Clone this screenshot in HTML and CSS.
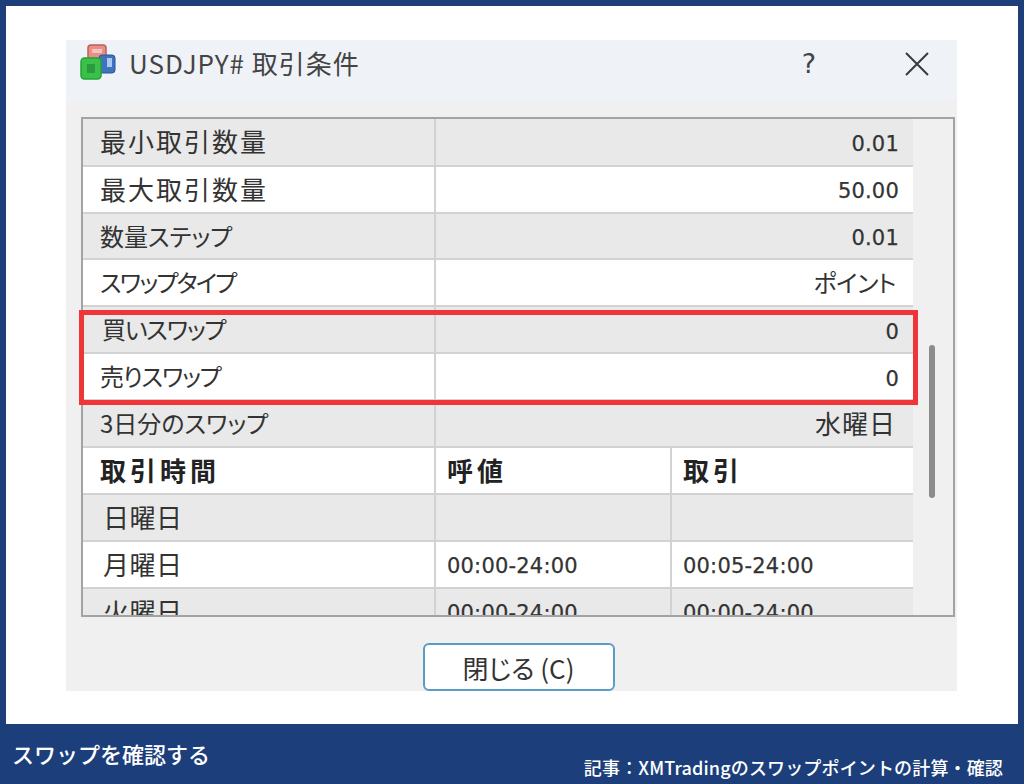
FILE: index.html
```html
<!DOCTYPE html>
<html lang="ja">
<head>
<meta charset="utf-8">
<title>USDJPY# 取引条件</title>
<link rel="stylesheet" href="styles.css">
</head>
<body>
<main class="stage">
  <section class="dialog">
    <header class="titlebar">
      <svg class="app-icon" width="36" height="36" viewBox="0 0 36 36" aria-hidden="true">
        <rect x="8" y="1" width="18" height="16" rx="3" fill="#e88f88" stroke="#b9625c" stroke-width="1.5"/>
        <rect x="12" y="5" width="10" height="4" fill="#f3c3be"/>
        <rect x="19" y="11" width="16" height="18" rx="3" fill="#3f74bd" stroke="#2a5796"/>
        <rect x="27" y="14" width="5" height="9" fill="#a9c9ee"/>
        <rect x="1" y="14" width="20" height="21" rx="3.5" fill="#3cc04c" stroke="#22a336" stroke-width="1.5"/>
        <rect x="7" y="20" width="8" height="9" fill="#2a9a3a"/>
      </svg>
      <h1 class="title">USDJPY# 取引条件</h1>
      <span class="help">?</span>
      <svg class="close" width="26" height="26" viewBox="0 0 26 26" aria-hidden="true">
        <path d="M2 2 L24 24 M24 2 L2 24" stroke="#3a3a3a" stroke-width="2" fill="none"/>
      </svg>
    </header>
    <div class="frame">
      <div class="rows">
        <div class="row two shade first"><span class="cell label">最小取引数量</span><span class="cell value num">0.01</span></div>
        <div class="row two"><span class="cell label">最大取引数量</span><span class="cell value num">50.00</span></div>
        <div class="row two shade"><span class="cell label kana">数量ステップ</span><span class="cell value num">0.01</span></div>
        <div class="row two"><span class="cell label kana tight">スワップタイプ</span><span class="cell value kana soft">ポイント</span></div>
        <div class="row two shade"><span class="cell label kana snug inset">買いスワップ</span><span class="cell value num">0</span></div>
        <div class="row two"><span class="cell label kana snug">売りスワップ</span><span class="cell value num">0</span></div>
        <div class="row two shade"><span class="cell label kana">3日分のスワップ</span><span class="cell value spaced">水曜日</span></div>
        <div class="row three"><span class="cell label head">取引時間</span><span class="cell head">呼値</span><span class="cell head">取引</span></div>
        <div class="row three shade"><span class="cell label inset">日曜日</span><span class="cell"></span><span class="cell"></span></div>
        <div class="row three"><span class="cell label inset">月曜日</span><span class="cell num">00:00-24:00</span><span class="cell num">00:05-24:00</span></div>
        <div class="row three shade"><span class="cell label inset">火曜日</span><span class="cell num">00:00-24:00</span><span class="cell num">00:00-24:00</span></div>
      </div>
      <div class="scrollbar"><div class="thumb"></div></div>
      <div class="highlight"></div>
    </div>
    <div class="actions"><button class="close-btn" type="button">閉じる (C)</button></div>
  </section>
</main>
<footer class="caption">
  <span class="caption-title">スワップを確認する</span>
  <span class="caption-source">記事：XMTradingのスワップポイントの計算・確認</span>
</footer>
</body>
</html>
```
FILE: styles.css
```css
* { box-sizing: border-box; }
html, body { margin: 0; padding: 0; }
body {
  width: 1024px;
  height: 784px;
  overflow: hidden;
  display: flex;
  flex-direction: column;
  background: #1c3f7c;
  font-family: "Noto Sans CJK JP", "Noto Sans", sans-serif;
  color: #333;
}
.stage {
  height: 718px;
  margin: 6px 6px 0;
  background: #fff;
  padding: 34px 61px 0 60px;
}
.dialog {
  height: 651px;
  background: #f0f0f0;
  display: flex;
  flex-direction: column;
}
.titlebar {
  height: 60px;
  flex: none;
  background: #eff3f8;
  display: flex;
  align-items: center;
  padding: 0 27px 0 14px;
}
.app-icon { flex: none; margin-top: -16px; }
.title {
  margin: -15px 0 0 13px;
  font-size: 26px;
  letter-spacing: 1px;
  font-weight: 400;
  color: #444;
  flex: 1;
  white-space: nowrap;
}
.help {
  font-family: "DejaVu Sans", sans-serif;
  font-size: 27px;
  line-height: 1;
  color: #444;
  margin: -13px 88px 0 0;
}
.close { margin-top: -12px; }
.frame {
  position: relative;
  margin: 17px 2px 0 15px;
  height: 500px;
  flex: none;
  border: 2px solid #a3a3a3;
  background: #f0f0f0;
  display: flex;
}
.rows {
  width: 830px;
  flex: none;
  height: 100%;
  overflow: hidden;
}
.row {
  display: grid;
  height: 46.9px;
  background: #fff;
  border-bottom: 2px solid #d2d2d2;
}
.row.first { height: 47.7px; }
.row.two { grid-template-columns: 351px 1fr; }
.row.three { grid-template-columns: 351px 236px 1fr; }
.row.shade { background: #e9e9e9; }
.cell {
  display: flex;
  align-items: center;
  padding: 0 13px 3px 11px;
  font-size: 26px;
  line-height: 1;
  letter-spacing: 2px;
  white-space: nowrap;
  border-left: 2px solid #d2d2d2;
  margin-bottom: -2px;
}
.label { padding-left: 17px; border-left: 0; }
.label.inset { padding-left: 20px; letter-spacing: 0.5px; }
.label.kana.inset { padding-left: 19px; }
.value { justify-content: flex-end; padding-right: 17px; letter-spacing: 0; }
.value.spaced { letter-spacing: 1px; }
.kana { font-feature-settings: "palt" 1; font-size: 24px; letter-spacing: 0; }
.label.kana.snug { letter-spacing: -1.2px; }
.value.kana.soft { letter-spacing: -0.4px; }
.label.kana.tight { letter-spacing: -1.8px; }
.num {
  font-family: "DejaVu Sans", sans-serif;
  font-size: 21px;
  letter-spacing: 0.2px;
  padding-top: 3px;
  padding-bottom: 0;
  -webkit-text-stroke: 0.25px #333;
}
.value.num { padding-right: 14px; }
.head { font-weight: 700; color: #222; letter-spacing: 4px; }
.scrollbar {
  flex: 1;
  position: relative;
}
.thumb {
  position: absolute;
  top: 226px;
  left: 16px;
  width: 6px;
  height: 153px;
  border-radius: 3px;
  background: #8c8c8c;
}
.highlight {
  position: absolute;
  left: -4px;
  top: 191px;
  width: 839px;
  height: 95px;
  border: 5px solid #ef3538;
}
.actions {
  flex: 1;
  display: flex;
  justify-content: center;
  align-items: flex-end;
  padding-left: 14px;
}
.close-btn {
  width: 192px;
  height: 48px;
  background: #fff;
  border: 2px solid #5b9cc7;
  border-radius: 6px;
  font-family: "Noto Sans CJK JP", sans-serif;
  font-size: 26px;
  color: #333;
  font-feature-settings: "palt" 1;
  padding: 0;
}
.caption {
  height: 60px;
  flex: none;
  display: flex;
  justify-content: space-between;
  padding: 0 21px 0 12px;
  color: #fff;
}
.caption-title { font-size: 22px; font-weight: 500; line-height: 58px; }
.caption-source { font-size: 18px; font-weight: 500; letter-spacing: 0.15px; line-height: 86px; }
```
